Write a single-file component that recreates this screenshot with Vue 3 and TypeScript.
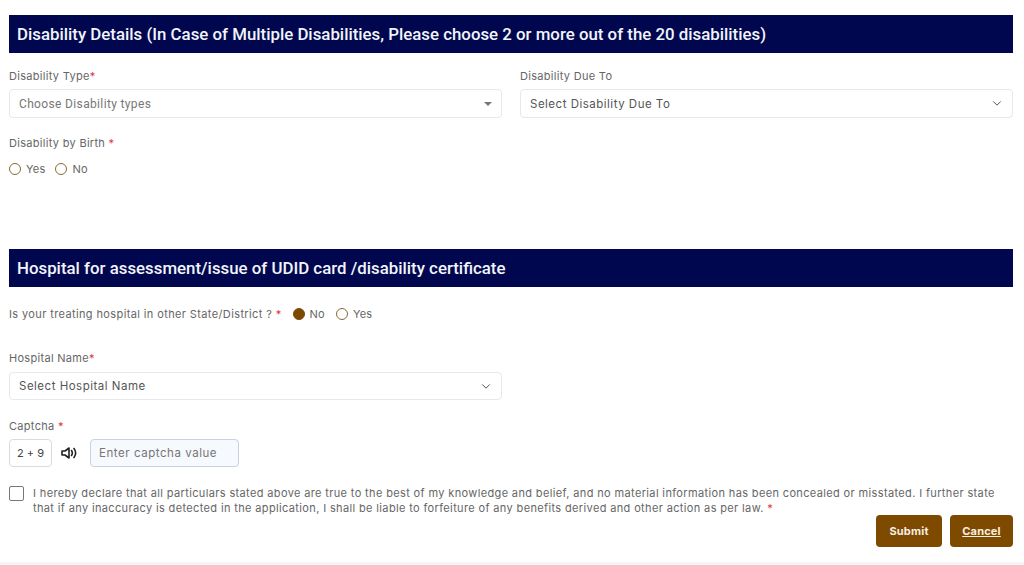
<script setup lang="ts">
const declaration =
  'I hereby declare that all particulars stated above are true to the best of my knowledge and belief, and no material information has been concealed or misstated. I further state that if any inaccuracy is detected in the application, I shall be liable to forfeiture of any benefits derived and other action as per law.'
</script>

<template>
  <div class="page">
    <h2 class="bar">Disability Details (In Case of Multiple Disabilities, Please choose 2 or more out of the 20 disabilities)</h2>

    <div class="grid">
      <div class="field">
        <label class="label">Disability Type<span class="req">*</span></label>
        <div class="select">
          <span class="roboto">Choose Disability types</span>
          <span class="caret"></span>
        </div>
      </div>
      <div class="field">
        <label class="label">Disability Due To</label>
        <div class="select">
          <span>Select Disability Due To</span>
          <svg class="chev" viewBox="0 0 12 8" width="10" height="7"><path d="M1.5 1.5 6 6l4.500-4.500" fill="none" stroke="#555" stroke-width="1.200" /></svg>
        </div>
      </div>
    </div>

    <div class="birth">
      <div class="label">Disability by Birth <span class="req">*</span></div>
      <div class="radios">
        <span class="radio"><i class="dot"></i>Yes</span>
        <span class="radio"><i class="dot"></i>No</span>
      </div>
    </div>

    <h2 class="bar second">Hospital for assessment/issue of UDID card /disability certificate</h2>

    <div class="question">
      <span class="label tight">Is your treating hospital in other State/District ? <span class="req">*</span></span>
      <span class="radio"><i class="dot on"></i>No</span>
      <span class="radio"><i class="dot"></i>Yes</span>
    </div>

    <div class="hospital">
      <label class="label">Hospital Name<span class="req">*</span></label>
      <div class="select short">
        <span>Select Hospital Name</span>
        <svg class="chev" viewBox="0 0 12 8" width="10" height="7"><path d="M1.5 1.500 6 6l4.500-4.500" fill="none" stroke="#555" stroke-width="1.200" /></svg>
      </div>
    </div>

    <div class="captcha">
      <label class="label">Captcha <span class="req">*</span></label>
      <div class="captcha-row">
        <div class="sum">2 + 9</div>
        <svg class="speaker" viewBox="0 0 16 12" width="16" height="12">
          <path d="M1 4h3l4-3v10L4 8H1z" fill="none" stroke="#222" stroke-width="1.600" stroke-linejoin="round" />
          <path d="M10.500 3.500c1 1.500 1 3.500 0 5M13 1.500c2 2.700 2 6.300 0 9" fill="none" stroke="#222" stroke-width="1.600" stroke-linecap="round" />
        </svg>
        <input class="answer" type="text" placeholder="Enter captcha value" />
      </div>
    </div>

    <div class="declare">
      <span class="check"></span>
      <p>{{ declaration }} <span class="req">*</span></p>
    </div>

    <div class="actions">
      <button class="btn" type="button">Submit</button>
      <button class="btn link" type="button">Cancel</button>
    </div>
  </div>
  <div class="band"></div>
</template>

<style>
html, body { background: #fff; }
</style>

<style scoped>
.page {
  box-sizing: border-box;
  height: 562px;
  padding: 15px 11px 0 9px;
  font-family: Inter, "Open Sans", "Liberation Sans", sans-serif;
  color: #555;
  overflow: hidden;
}
.bar {
  margin: 0;
  height: 38px;
  padding: 0 8px;
  display: flex;
  align-items: center;
  background: #00074f;
  color: #f2f4fa;
  font-family: Roboto, "Liberation Sans", sans-serif;
  font-size: 16.830px;
  font-weight: 500;
  white-space: nowrap;
}
.second { margin-top: 72px; }
.grid {
  display: grid;
  grid-template-columns: 1fr 1fr;
  column-gap: 18px;
  margin-top: 15px;
}
.label {
  display: block;
  font-size: 11px;
  line-height: 16px;
  letter-spacing: 0.3px;
  color: #666;
}
.label.tight { letter-spacing: 0.38px; }
.req { color: #d9363e; }
.select {
  box-sizing: border-box;
  height: 29px;
  margin-top: 5px;
  padding: 0 9px;
  display: flex;
  align-items: center;
  justify-content: space-between;
  border: 1px solid #e6e8ec;
  border-radius: 4px;
  background: #fff;
  font-size: 11.500px;
  letter-spacing: 0.5px;
  color: #555;
}
.select.short { height: 28px; margin-top: 6px; }
.roboto {
  font-family: Roboto, "Liberation Sans", sans-serif;
  font-size: 12px;
  letter-spacing: 0.35px;
  color: #777;
}
.caret {
  width: 0;
  height: 0;
  border-left: 4px solid transparent;
  border-right: 4px solid transparent;
  border-top: 4px solid #777;
}
.chev { margin-right: 1px; }
.birth { margin-top: 17px; }
.radios {
  display: flex;
  gap: 10px;
  margin-top: 10px;
}
.radio {
  display: inline-flex;
  align-items: center;
  gap: 5px;
  font-size: 11px;
  line-height: 16px;
  letter-spacing: 0.2px;
  color: #666;
}
.dot {
  box-sizing: border-box;
  width: 12px;
  height: 12px;
  border: 1.500px solid #8a6a33;
  border-radius: 50%;
}
.dot.on {
  background: #7b4a00;
  border-color: #7b4a00;
}
.question {
  display: flex;
  align-items: center;
  gap: 11px;
  margin-top: 19px;
}
.hospital { margin-top: 28px; width: 493px; }
.captcha { margin-top: 18px; }
.captcha-row {
  display: flex;
  align-items: center;
  margin-top: 5px;
}
.sum {
  box-sizing: border-box;
  width: 43px;
  height: 28px;
  display: flex;
  align-items: center;
  justify-content: center;
  border: 1px solid #d8dbe2;
  border-radius: 4px;
  font-size: 11px;
  color: #444;
}
.speaker { margin-left: 9px; }
.answer {
  box-sizing: border-box;
  width: 149px;
  height: 28px;
  margin-left: 13px;
  padding: 0 8px;
  border: 1px solid #c9d2e3;
  border-radius: 4px;
  background: #f6f9fd;
  font-family: inherit;
  font-size: 11.500px;
  letter-spacing: 0.55px;
  outline: none;
}
.answer::placeholder { color: #777; opacity: 1; }
.declare {
  display: flex;
  gap: 9px;
  margin-top: 18px;
}
.check {
  box-sizing: border-box;
  flex: none;
  width: 15px;
  height: 15px;
  margin-top: 1px;
  border: 1px solid #777;
  border-radius: 2px;
}
.declare p {
  margin: 0;
  padding-top: 1px;
  font-size: 11px;
  line-height: 15px;
  letter-spacing: 0.36px;
  color: #666;
}
.actions {
  display: flex;
  justify-content: flex-end;
  gap: 8px;
  margin-top: -1px;
}
.btn {
  height: 32px;
  min-width: 63px;
  padding: 0 11px;
  border: 0;
  border-radius: 4px;
  background: #7e4a00;
  color: #f7efe0;
  font-family: inherit;
  font-size: 11px;
  font-weight: 700;
  letter-spacing: 0.2px;
}
.btn:first-child { min-width: 66px; }
.link { text-decoration: underline; }
.band {
  height: 3px;
  background: #f4f5f6;
}
</style>
